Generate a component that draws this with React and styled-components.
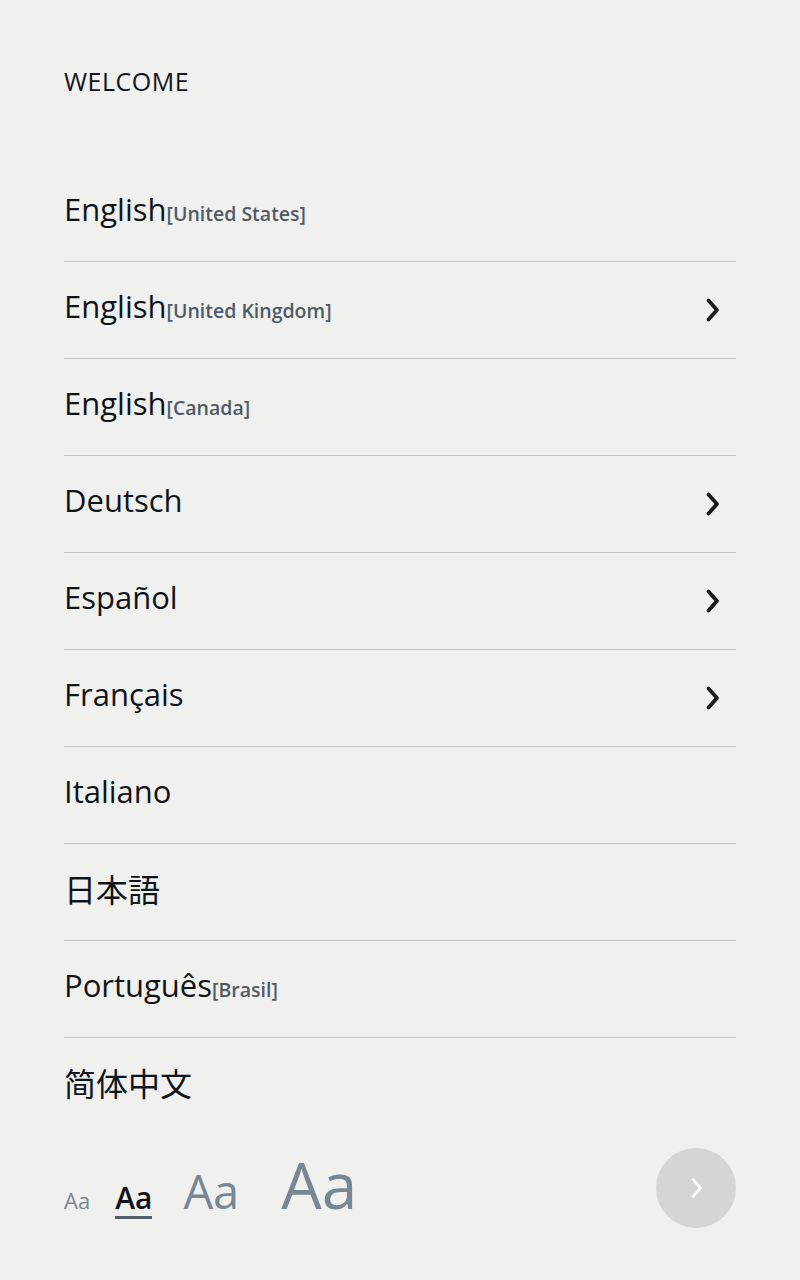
import styled, { createGlobalStyle } from 'styled-components';

const GlobalStyle = createGlobalStyle`
  html, body {
    margin: 0;
    padding: 0;
    background: #f0f0ef;
  }
  body {
    font-family: "Open Sans", "Noto Sans", "Noto Sans CJK JP", sans-serif;
    color: #0f141a;
  }
`;

const Page = styled.div`
  width: 800px;
  height: 1280px;
  box-sizing: border-box;
  padding: 64px 64px 0;
  display: flex;
  flex-direction: column;
`;

const Title = styled.h1`
  margin: 0;
  font-size: 25px;
  line-height: 34px;
  font-weight: 500;
  letter-spacing: 0.5px;
  color: #0f141a;
`;

const List = styled.ul`
  list-style: none;
  margin: 67px 0 0;
  padding: 0;
`;

const Row = styled.li`
  height: 96px;
  display: flex;
  align-items: center;
  justify-content: space-between;
  border-bottom: 1px solid #c4c4c4;
  &:last-child {
    border-bottom: none;
  }
`;

const Label = styled.span`
  margin-bottom: 8px;
  font-size: ${p => (p.$cjk ? 32 : 31)}px;
  font-weight: 400;
  color: #0f141a;
  font-family: "Open Sans", "Noto Sans CJK JP", "Noto Sans CJK SC", sans-serif;
`;

const Region = styled.span`
  font-size: 19.5px;
  font-weight: 600;
  color: #4f5a66;
`;

const Chevron = ({ color = '#1a1a1a', width = 20, height = 28, stroke = 3.8 }) => (
  <svg width={width} height={height} viewBox="0 0 20 28" fill="none">
    <path d="M5.5 4.5L14 14l-8.5 9.5" stroke={color} strokeWidth={stroke} strokeLinecap="round" strokeLinejoin="round" />
  </svg>
);

const ChevronSlot = styled.span`
  display: flex;
  margin-right: 13px;
`;

const Footer = styled.div`
  display: flex;
  align-items: center;
  justify-content: space-between;
  margin-top: 14px;
`;

const Sizes = styled.div`
  display: flex;
  align-items: baseline;
`;

const SizeOption = styled.span`
  font-size: ${p => p.$size}px;
  line-height: 1;
  color: ${p => (p.$active ? '#0f141a' : '#778795')};
  font-weight: ${p => (p.$active ? 600 : 400)};
  padding-bottom: 3px;
  border-bottom: 3px solid ${p => (p.$active ? '#535e6b' : 'transparent')};
  margin-right: ${p => p.$gap || 0}px;
`;

const NextButton = styled.button`
  width: 80px;
  height: 80px;
  border-radius: 50%;
  border: none;
  background: #d5d5d5;
  display: flex;
  align-items: center;
  justify-content: center;
  padding: 0 0 0 2px;
`;

const languages = [
  { name: 'English', region: 'United States' },
  { name: 'English', region: 'United Kingdom', more: true },
  { name: 'English', region: 'Canada' },
  { name: 'Deutsch', more: true },
  { name: 'Español', more: true },
  { name: 'Français', more: true },
  { name: 'Italiano' },
  { name: '日本語', cjk: true },
  { name: 'Português', region: 'Brasil' },
  { name: '简体中文', cjk: true },
];

export default function App() {
  return (
    <Page>
      <GlobalStyle />
      <Title>WELCOME</Title>
      <List>
        {languages.map((l, i) => (
          <Row key={i}>
            <Label $cjk={l.cjk}>
              {l.name}
              {l.region && <Region>[{l.region}]</Region>}
            </Label>
            {l.more && (
              <ChevronSlot>
                <Chevron />
              </ChevronSlot>
            )}
          </Row>
        ))}
      </List>
      <Footer>
        <Sizes>
          <SizeOption $size={22} $gap={25}>Aa</SizeOption>
          <SizeOption $size={30} $gap={31} $active>Aa</SizeOption>
          <SizeOption $size={47} $gap={42}>Aa</SizeOption>
          <SizeOption $size={64}>Aa</SizeOption>
        </Sizes>
        <NextButton aria-label="Next">
          <Chevron color="#ffffff" width={18} height={26} stroke={3} />
        </NextButton>
      </Footer>
    </Page>
  );
}
